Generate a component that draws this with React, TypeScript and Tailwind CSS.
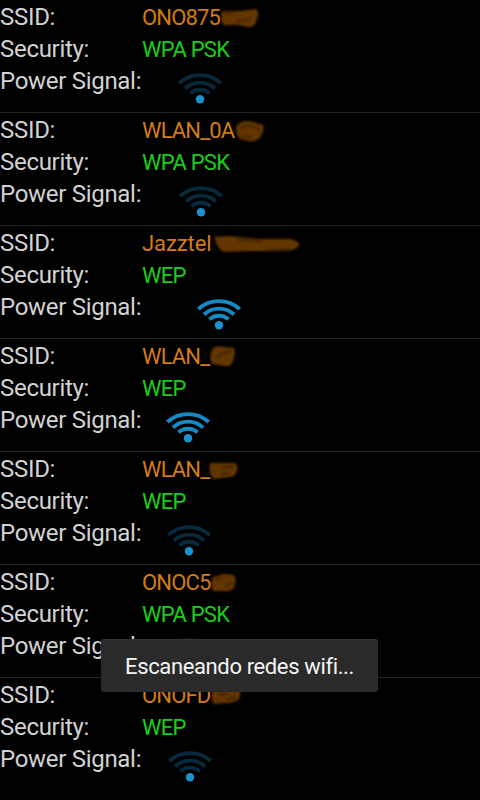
import clsx from "clsx"

type Network = {
  ssid: string
  security: string
  strong?: boolean
  wide?: boolean
  iconX: number
  // brush blob that hides the end of the name, with its darker strokes
  smudge: string
  shade: string
}

const networks: Network[] = [
  {
    ssid: "ONO875",
    security: "WPA PSK",
    iconX: 200,
    smudge: "M22 11 L40 11 L56 9 Q60 11 57 19 Q55 28 49 27 L37 25 L23 25 Q20 19 22 11Z",
    shade: "M24 13 L34 12 M36 22 L50 19",
  },
  {
    ssid: "WLAN_0A",
    security: "WPA PSK",
    iconX: 201,
    smudge: "M37 12 Q44 6 53 9 L63 12 Q65 17 61 23 Q56 30 48 28 L40 26 Q36 22 36 15Z",
    shade: "M40 15 L49 12 L60 17 M42 24 L52 24",
  },
  {
    ssid: "Jazztel",
    security: "WEP",
    strong: true,
    wide: true,
    iconX: 219,
    smudge: "M14 11 L30 10 L60 13 L90 13 Q100 15 99 20 Q96 25 80 25 L50 25 L24 26 Q18 24 14 11Z",
    shade: "M36 13 L62 15 M66 24 L90 23",
  },
  {
    ssid: "WLAN_",
    security: "WEP",
    strong: true,
    iconX: 188,
    smudge: "M13 9 Q18 6 24 8 L34 9 Q36 14 33 22 Q31 28 26 27 L12 25 Q8 18 13 9Z",
    shade: "M16 19 L23 14 L31 12",
  },
  {
    ssid: "WLAN_",
    security: "WEP",
    iconX: 189,
    smudge: "M10 11 L34 11 Q39 12 37 18 Q36 25 30 25 L14 27 Q8 22 10 11Z",
    shade: "M22 16 L34 14 M22 22 L30 21",
  },
  {
    ssid: "ONOC5",
    security: "WPA PSK",
    iconX: 188,
    smudge: "M13 12 L24 9 L34 10 Q37 16 34 23 Q30 27 24 26 L13 26 Q10 20 13 12Z",
    shade: "M15 14 L23 13 M25 22 L33 17",
  },
  {
    ssid: "ONOFD",
    security: "WEP",
    iconX: 190,
    smudge: "M13 12 L26 10 L39 11 Q42 17 38 22 Q32 26 25 25 L14 26 Q10 20 13 12Z",
    shade: "M18 17 L28 15 M26 22 L36 19",
  },
]

function WifiIcon({ strong }: { strong?: boolean }) {
  return (
    <svg viewBox="0 0 48 32" className="block h-8 w-12" fill="none">
      <g className={clsx(strong ? "stroke-[#168ac4]" : "stroke-[#06293b]")} strokeWidth="3.9">
        <path d="M3.3 11 A31 31 0 0 1 44.7 11" />
        <path d="M9 16.5 A22 22 0 0 1 39 16.5" />
        <path d="M14.5 21.4 A14 14 0 0 1 33.5 21.4" />
      </g>
      <circle cx="24" cy="27.2" r="4.2" className="fill-[#1b91cf]" />
    </svg>
  )
}

function Smudge({ network }: { network: Network }) {
  return (
    <svg viewBox="0 0 110 34" className="absolute top-0 left-[200px] h-[34px] w-[110px] blur-[1px]" fill="none">
      <path d={network.smudge} fill="#633600" />
      <path d={network.shade} stroke="#4a2903" strokeWidth="3" />
    </svg>
  )
}

function NetworkRow({ network }: { network: Network }) {
  return (
    <li className="relative h-[113px] border-b border-[#252525] pt-0.5 last:border-b-0">
      <dl className="grid auto-rows-[32px] grid-cols-[142px_1fr] leading-[32px] whitespace-nowrap">
        <Label>SSID:</Label>
        <dd className={clsx("text-[22px] text-[#d47c12]", network.wide ? "tracking-[-0.1px]" : "tracking-[-0.85px]")}>
          {network.ssid}
        </dd>
        <Label>Security:</Label>
        <dd className="text-[22px] tracking-[-0.75px] text-[#18cf18]">{network.security}</dd>
        <Label>Power Signal:</Label>
        <dd className="pt-1.5">
          <div style={{ marginLeft: network.iconX - 166 }}>
            <WifiIcon strong={network.strong} />
          </div>
        </dd>
      </dl>
      <Smudge network={network} />
    </li>
  )
}

function Label({ children }: { children: string }) {
  return <dt className="-mt-px text-2xl leading-[32px] tracking-[-0.3px] text-[#d2d2d2]">{children}</dt>
}

export default function App() {
  return (
    <main className="relative h-[800px] w-[480px] overflow-hidden bg-black font-['Roboto',sans-serif]">
      <ul>
        {networks.map((network, index) => (
          <NetworkRow key={index} network={network} />
        ))}
      </ul>

      {/* Toast */}
      <div className="absolute top-[639px] left-[101px] flex h-[53px] w-[277px] items-center justify-center rounded-[3px] border-t border-[#333] bg-[#2a2a2a] text-[22px] tracking-[-0.37px] whitespace-nowrap text-[#f4f4f4]">
        <span>Escaneando redes wifi...</span>
      </div>
    </main>
  )
}
